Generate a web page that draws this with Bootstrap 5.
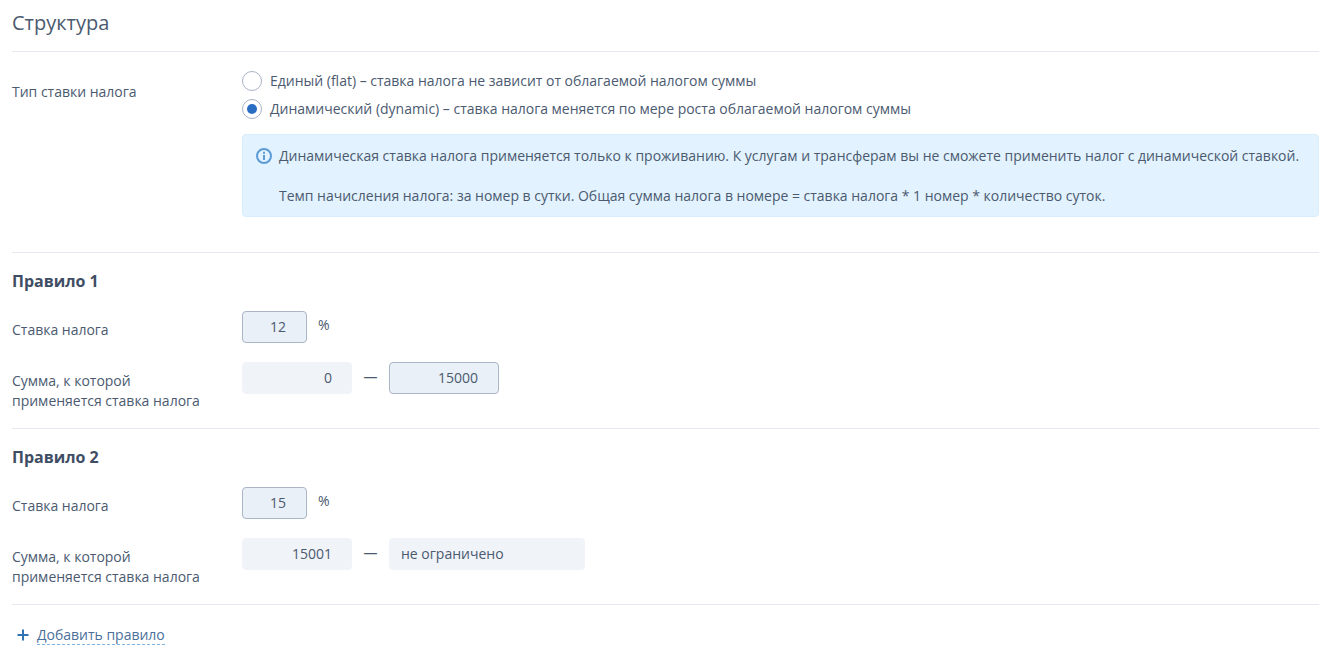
<!DOCTYPE html>
<html lang="ru">
<head>
<meta charset="utf-8">
<title>Структура</title>
<link href="https://cdn.jsdelivr.net/npm/bootstrap@5.3.0/dist/css/bootstrap.min.css" rel="stylesheet">
<style>
body{font-family:"Open Sans","Noto Sans",sans-serif;font-size:14px;line-height:20px;color:#4b5a70;background:#fff;overflow:hidden;letter-spacing:-.01px}
.page-wrap{padding:0 14px 0 12px}
.page-title{font-size:20px;line-height:28px;font-weight:400;margin:0;padding:9px 0 14px;border-bottom:1px solid #e6e9ef;color:#4b5a70}
.type-block{padding:15px 0 35px;border-bottom:1px solid #e6e9ef}
.lbl-col{width:230px;flex:none}
.type-label{padding-top:15px}
.rad-row{display:flex;align-items:center;height:28px;gap:8px;margin:0}
.rad-row .form-check-input{width:20px;height:20px;margin:0;flex:none;border:1px solid #a9b3c4;background-color:#fff;box-shadow:none}
.rad-row .form-check-input:checked{background-color:#fff;border-color:#a9b3c4;background-image:url("data:image/svg+xml,%3csvg xmlns='http://www.w3.org/2000/svg' viewBox='-10 -10 20 20'%3e%3ccircle r='5' fill='%232a6ec4'/%3e%3c/svg%3e");background-size:20px 20px;background-position:center}
.info-box{display:flex;gap:7px;margin-top:11px;padding:11px 13px 10px 13px;background:#e2f2fe;border:1px solid #d9eefd;border-radius:4px}
.info-box svg{flex:none;margin-top:2px}
.info-box p{margin:0}
.info-box p+p{margin-top:20px}
.rule-block{padding:18px 0 17px;border-bottom:1px solid #e6e9ef}
.rule-name{font-size:16px;line-height:20px;font-weight:700;margin:0 0 20px;color:#3f4e64}
.rule-row{display:flex;align-items:flex-start}
.rule-row+.rule-row{margin-top:19px}
.rate-label{padding-top:9px}
.sum-label{padding-top:9px}
.form-control.num-box{height:32px;padding:0 20px 2px 10px;font-size:14px;line-height:20px;color:#4b5a70;text-align:right;border-radius:4px;background:#e9f0f8;border:1px solid #aab5c6;box-shadow:none}
.form-control.num-box.is-ro{background:#f0f3f8;border-color:#f0f3f8;padding-right:19px}
.form-control.num-box.is-left{text-align:left;padding:0 10px 2px 11px}
.w-rate{width:65px}
.w-sum{width:110px}
.w-open{width:196px}
.unit-pct{font-size:14px;line-height:20px;margin:4px 0 0 11px}
.dash-sep{width:37px;text-align:center;line-height:30px;flex:none}
.add-row{display:flex;align-items:center;padding:20px 0 0 5px;gap:8px}
.add-link{color:#4b6f9b;text-decoration:none;border-bottom:1px dashed #7fb5e6;line-height:19px}
</style>
</head>
<body>
<div class="page-wrap">
  <h2 class="page-title">Структура</h2>
  <div class="type-block d-flex">
    <div class="lbl-col type-label">Тип ставки налога</div>
    <div class="flex-grow-1">
      <div>
        <label class="rad-row"><input class="form-check-input" type="radio" name="kind"><span>Единый (flat) – ставка налога не зависит от облагаемой налогом суммы</span></label>
        <label class="rad-row"><input class="form-check-input" type="radio" name="kind" checked><span>Динамический (dynamic) – ставка налога меняется по мере роста облагаемой налогом суммы</span></label>
      </div>
      <div class="info-box">
        <svg width="16" height="16" viewBox="0 0 16 16" fill="none"><circle cx="8" cy="8" r="7" stroke="#5b9bd8" stroke-width="2"/><rect x="7" y="7" width="2" height="5" fill="#5b9bd8"/><rect x="7" y="3.8" width="2" height="2" fill="#5b9bd8"/></svg>
        <div>
          <p>Динамическая ставка налога применяется только к проживанию. К услугам и трансферам вы не сможете применить налог с динамической ставкой.</p>
          <p>Темп начисления налога: за номер в сутки. Общая сумма налога в номере = ставка налога * 1 номер * количество суток.</p>
        </div>
      </div>
    </div>
  </div>

  <div class="rule-block">
    <h3 class="rule-name">Правило 1</h3>
    <div class="rule-row">
      <div class="lbl-col rate-label">Ставка налога</div>
      <input class="form-control num-box w-rate" value="12">
      <div class="unit-pct">%</div>
    </div>
    <div class="rule-row">
      <div class="lbl-col sum-label">Сумма, к которой<br>применяется ставка налога</div>
      <input class="form-control num-box is-ro w-sum" value="0" readonly>
      <div class="dash-sep">—</div>
      <input class="form-control num-box w-sum" value="15000">
    </div>
  </div>

  <div class="rule-block">
    <h3 class="rule-name">Правило 2</h3>
    <div class="rule-row">
      <div class="lbl-col rate-label">Ставка налога</div>
      <input class="form-control num-box w-rate" value="15">
      <div class="unit-pct">%</div>
    </div>
    <div class="rule-row">
      <div class="lbl-col sum-label">Сумма, к которой<br>применяется ставка налога</div>
      <input class="form-control num-box is-ro w-sum" value="15001" readonly>
      <div class="dash-sep">—</div>
      <input class="form-control num-box is-ro is-left w-open" value="не ограничено" readonly>
    </div>
  </div>

  <div class="add-row">
    <svg width="12" height="12" viewBox="0 0 12 12"><path d="M6 0.5v11M0.5 6h11" stroke="#2f73b0" stroke-width="2"/></svg>
    <a class="add-link" href="#">Добавить правило</a>
  </div>
</div>
</body>
</html>
